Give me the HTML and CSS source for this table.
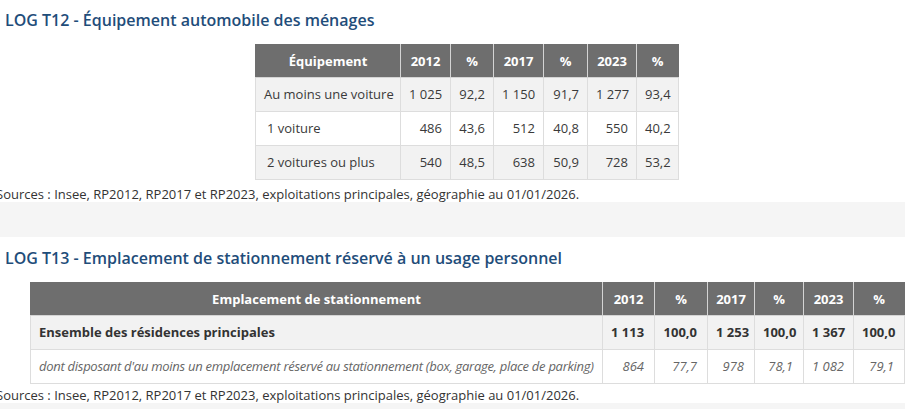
FILE: index.html
```html
<!DOCTYPE html>
<html lang="fr">
<head>
<meta charset="utf-8">
<title>LOG T12 / LOG T13</title>
<link rel="stylesheet" href="styles.css">
</head>
<body>
<h2 class="title">LOG T12 - Équipement automobile des ménages</h2>
<table class="data t12">
  <colgroup>
    <col class="c-lab1"><col class="c-50"><col class="c-43"><col class="c-50"><col class="c-44"><col class="c-49"><col class="c-42">
  </colgroup>
  <thead>
    <tr><th>Équipement</th><th>2012</th><th>%</th><th>2017</th><th>%</th><th>2023</th><th>%</th></tr>
  </thead>
  <tbody>
    <tr class="shade"><td class="lab">Au moins une voiture</td><td>1&nbsp;025</td><td>92,2</td><td>1&nbsp;150</td><td>91,7</td><td>1&nbsp;277</td><td>93,4</td></tr>
    <tr><td class="lab indent">1 voiture</td><td>486</td><td>43,6</td><td>512</td><td>40,8</td><td>550</td><td>40,2</td></tr>
    <tr class="shade"><td class="lab indent">2 voitures ou plus</td><td>540</td><td>48,5</td><td>638</td><td>50,9</td><td>728</td><td>53,2</td></tr>
  </tbody>
</table>
<p class="sources s1">Sources : Insee, RP2012, RP2017 et RP2023, exploitations principales, géographie au 01/01/2026.</p>
<div class="band"></div>
<h2 class="title t2">LOG T13 - Emplacement de stationnement réservé à un usage personnel</h2>
<table class="data t13">
  <colgroup>
    <col class="c-lab2"><col class="c-52"><col class="c-53"><col class="c-47"><col class="c-49"><col class="c-50"><col class="c-51">
  </colgroup>
  <thead>
    <tr><th>Emplacement de stationnement</th><th>2012</th><th>%</th><th>2017</th><th>%</th><th>2023</th><th>%</th></tr>
  </thead>
  <tbody>
    <tr class="shade bold"><td class="lab">Ensemble des résidences principales</td><td>1&nbsp;113</td><td>100,0</td><td>1&nbsp;253</td><td>100,0</td><td>1&nbsp;367</td><td>100,0</td></tr>
    <tr class="ital"><td class="lab">dont disposant d'au moins un emplacement réservé au stationnement (box, garage, place de parking)</td><td>864</td><td>77,7</td><td>978</td><td>78,1</td><td>1&nbsp;082</td><td>79,1</td></tr>
  </tbody>
</table>
<p class="sources s2">Sources : Insee, RP2012, RP2017 et RP2023, exploitations principales, géographie au 01/01/2026.</p>
<div class="band band-end"></div>
</body>
</html>
```
FILE: styles.css
```css
html, body {
  margin: 0;
  padding: 0;
  background: #ffffff;
  overflow: hidden;
}
body {
  font-family: "Open Sans", "Liberation Sans", sans-serif;
  color: #333333;
  font-size: 13px;
}
.title {
  margin: 0;
  padding: 10px 0 0 5px;
  font-size: 16px;
  line-height: 20px;
  font-weight: 600;
  color: #1f4d7a;
}
.title.t2 {
  padding-top: 0;
  margin-top: 11px;
}
.data {
  border-collapse: collapse;
  table-layout: fixed;
  margin-top: 14px;
}
.t12 { margin-left: 255px; width: 423px; }
.t13 { margin-left: 30px; width: 874px; }
.c-lab1 { width: 145px; }
.c-lab2 { width: 572px; }
.c-42 { width: 42px; }
.c-43 { width: 43px; }
.c-44 { width: 44px; }
.c-47 { width: 47px; }
.c-49 { width: 49px; }
.c-50 { width: 50px; }
.c-51 { width: 51px; }
.c-52 { width: 52px; }
.c-53 { width: 53px; }

.data th {
  background: #6e6e6e;
  color: #ffffff;
  font-weight: 700;
  font-size: 13px;
  line-height: 18px;
  padding: 7px 4px;
  text-align: center;
  border: 1px solid #d4d4d4;
  border-top-color: #6e6e6e;
  white-space: nowrap;
}
.data th:first-child { border-left-color: #6e6e6e; }
.data th:last-child { border-right-color: #6e6e6e; }
.data td {
  font-size: 13px;
  line-height: 19px;
  padding: 7px 8px;
  text-align: right;
  border: 1px solid #dddddd;
  white-space: nowrap;
  color: #3a3a3a;
}
.t13 td { padding-right: 10px; }
.data td.lab {
  text-align: left;
  padding-left: 8px;
}
.data td.indent { padding-left: 11px; }
.shade td { background: #f2f2f2; }
.bold td { font-weight: 700; color: #333333; }
.ital td { font-style: italic; color: #666666; }
.ital td.lab { letter-spacing: -0.28px; }

.sources {
  margin: 0 0 0 -4px;
  font-size: 13px;
  line-height: 18px;
  color: #333333;
  white-space: nowrap;
}
.s1 { margin-top: 5px; }
.s2 { margin-top: 2px; }
.band {
  height: 35px;
  margin-top: -1px;
  background: #f5f5f5;
}
.band-end {
  height: 6px;
}
```
